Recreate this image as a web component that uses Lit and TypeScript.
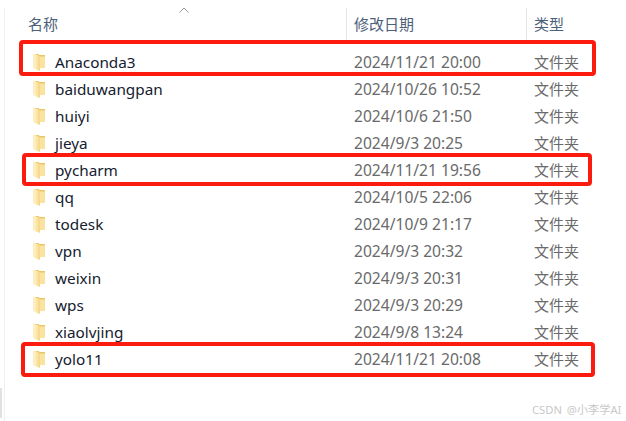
import { LitElement, html, css, svg } from "lit";
import { customElement } from "lit/decorators.js";

const rows = [
  ["Anaconda3", "2024/11/21 20:00"],
  ["baiduwangpan", "2024/10/26 10:52"],
  ["huiyi", "2024/10/6 21:50"],
  ["jieya", "2024/9/3 20:25"],
  ["pycharm", "2024/11/21 19:56"],
  ["qq", "2024/10/5 22:06"],
  ["todesk", "2024/10/9 21:17"],
  ["vpn", "2024/9/3 20:32"],
  ["weixin", "2024/9/3 20:31"],
  ["wps", "2024/9/3 20:29"],
  ["xiaolvjing", "2024/9/8 13:24"],
  ["yolo11", "2024/11/21 20:08"],
];

const folder = svg`<svg class="ico" width="15" height="20" viewBox="0 0 15 20">
  <defs><linearGradient id="fg" x1="0" x2="1" y1="0" y2="0"><stop offset="0" stop-color="#fff6d2"/><stop offset="1" stop-color="#f5d57f"/></linearGradient></defs>
  <path d="M1.500 2h5l1 1h5.500v13H1.500z" fill="#ebc566"/>
  <path d="M1.500 1.500l6.500 2.500v15l-6.500-2.500z" fill="url(#fg)"/>
  <path d="M8 4.500h5v11.500H8z" fill="#fae2a0"/>
</svg>`;

@customElement("app-root")
export class AppRoot extends LitElement {
  static styles = css`
    :host { display: block; position: relative; width: 626px; height: 421px; background: #fff; overflow: hidden;
      font-family: "Noto Sans", "Noto Sans CJK SC", sans-serif; font-size: 15px; }
    .table { padding: 8px 0 0 28px; }
    .head { display: grid; grid-template-columns: 318px 180px 90px; height: 32px; align-items: center; color: #4c607a; }
    .head span { height: 32px; line-height: 32px; }
    .head .sep { border-left: 1px solid #e5e5e5; padding-left: 7px; }
    .body { padding-top: 8px; }
    .row { display: grid; grid-template-columns: 27px 299px 180px 90px; height: 27px; align-items: center; }
    .name { color: #14202e; font-size: 15.3px; }
    .date { color: #6a6a6a; font-size: 15.6px; }
    .kind { color: #6a6a6a; }
    .ico { display: block; margin-left: 4px; }
    .sort { position: absolute; left: 178px; top: 7px; }
    .box { position: absolute; border: 4px solid #fb1b0f; border-radius: 4px; box-sizing: border-box; }
    .b1 { left: 19px; top: 40px; width: 577px; height: 36px; }
    .b2 { left: 22px; top: 153px; width: 570px; height: 33px; }
    .b3 { left: 21px; top: 342px; width: 574px; height: 35px; }
    .edge { position: absolute; left: 4px; top: 8px; width: 1px; height: 413px; background: #f0f0f0; }
    .grip { position: absolute; left: 0; top: 388px; width: 2px; height: 30px; background: #e2e2e2; }
    .mark { position: absolute; left: 532px; top: 401px; font-size: 11.2px; color: #c8c8c8; white-space: nowrap; word-spacing: 2px; }
  `;

  render() {
    return html`
      <div class="table">
        <div class="head">
          <span>名称</span>
          <span class="sep">修改日期</span>
          <span class="sep">类型</span>
        </div>
        <div class="body">
          ${rows.map(
            ([n, d]) => html`<div class="row">
              ${folder}
              <span class="name">${n}</span>
              <span class="date">${d}</span>
              <span class="kind">文件夹</span>
            </div>`
          )}
        </div>
      </div>
      <svg class="sort" width="12" height="7" viewBox="0 0 12 7"><path d="M1.500 5.500L6 1l4.500 4.500" fill="none" stroke="#9a9a9a"/></svg>
      <div class="edge"></div>
      <div class="grip"></div>
      <div class="box b1"></div>
      <div class="box b2"></div>
      <div class="box b3"></div>
      <div class="mark">CSDN @小李学AI</div>
    `;
  }
}
